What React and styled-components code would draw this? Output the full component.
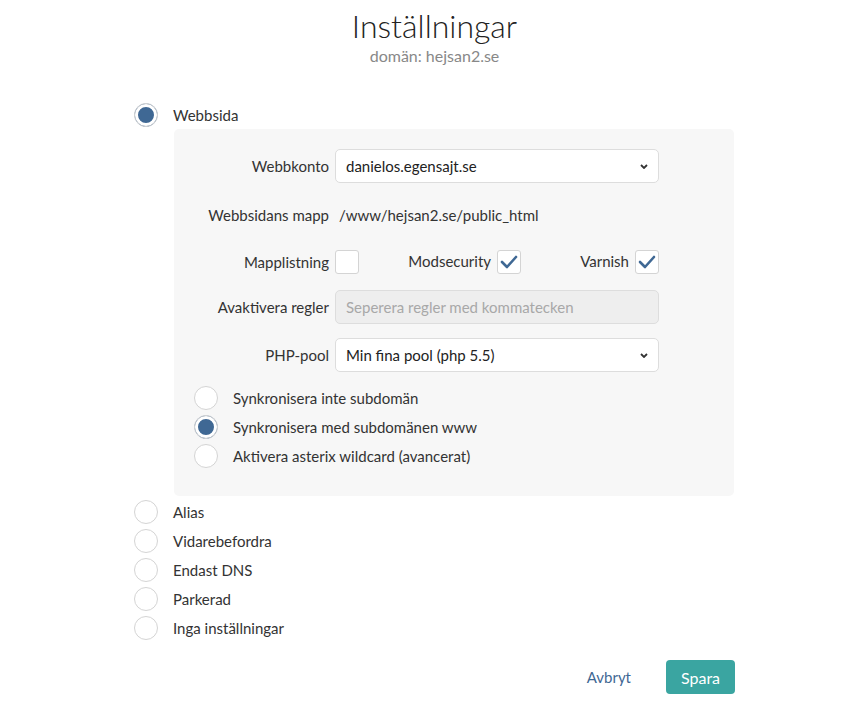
import React from "react";
import styled, { createGlobalStyle } from "styled-components";

const GlobalStyle = createGlobalStyle`
  body {
    margin: 0;
    background: #fff;
    font-family: Lato, "Open Sans", sans-serif;
    color: #333;
  }
`;

const App = () => {
  return (
    <>
      <GlobalStyle />
      <Page>
        <Header>
          <h1>Inställningar</h1>
          <span>domän: hejsan2.se</span>
        </Header>

        <Option>
          <Radio $checked />
          <span>Webbsida</span>
        </Option>

        <Panel>
          <FormRow $mb={15}>
            <Label>Webbkonto</Label>
            <SelectWrap>
              <select defaultValue="danielos.egensajt.se">
                <option>danielos.egensajt.se</option>
              </select>
              <Chevron />
            </SelectWrap>
          </FormRow>
          <FormRow $mb={13}>
            <Label>Webbsidans mapp</Label>
            <Value>/www/hejsan2.se/public_html</Value>
          </FormRow>
          <FormRow $mb={11}>
            <Label>Mapplistning</Label>
            <CheckGroup>
              <Checkbox />
              <CheckLabel>Modsecurity</CheckLabel>
              <Checkbox $checked />
              <CheckLabel>Varnish</CheckLabel>
              <Checkbox $checked />
            </CheckGroup>
          </FormRow>
          <FormRow $mb={14}>
            <Label>Avaktivera regler</Label>
            <TextInput disabled placeholder="Seperera regler med kommatecken" />
          </FormRow>
          <FormRow $mb={14}>
            <Label>PHP-pool</Label>
            <SelectWrap>
              <select defaultValue="Min fina pool (php 5.5)">
                <option>Min fina pool (php 5.5)</option>
              </select>
              <Chevron />
            </SelectWrap>
          </FormRow>

          <SubOptions>
            <Option>
              <Radio />
              <span>Synkronisera inte subdomän</span>
            </Option>
            <Option>
              <Radio $checked />
              <span>Synkronisera med subdomänen www</span>
            </Option>
            <Option>
              <Radio />
              <span>Aktivera asterix wildcard (avancerat)</span>
            </Option>
          </SubOptions>
        </Panel>

        <OptionList>
          {["Alias", "Vidarebefordra", "Endast DNS", "Parkerad", "Inga inställningar"].map(
            (name) => (
              <Option key={name}>
                <Radio />
                <span>{name}</span>
              </Option>
            )
          )}
        </OptionList>

        <Actions>
          <LinkButton>Avbryt</LinkButton>
          <PrimaryButton>Spara</PrimaryButton>
        </Actions>
      </Page>
    </>
  );
};

const Chevron = () => (
  <ChevronIcon width="8" height="5" viewBox="0 0 8 5">
    <path d="M1 1l3 3 3-3" fill="none" stroke="#333" strokeWidth="1.8" />
  </ChevronIcon>
);

const Checkbox = ({ $checked }) => (
  <Box>
    {$checked && (
      <svg width="18" height="14" viewBox="0 0 18 14">
        <path
          d="M2 7l5 5L16 2"
          fill="none"
          stroke="#3f6894"
          strokeWidth="2.6"
          strokeLinecap="round"
          strokeLinejoin="round"
        />
      </svg>
    )}
  </Box>
);

const Page = styled.div`
  width: 601px;
  margin-left: 134px;
  padding-top: 6px;
  padding-bottom: 14px;
`;

const Header = styled.header`
  display: flex;
  flex-direction: column;
  align-items: center;
  margin-bottom: 37px;
  h1 {
    margin: 0;
    font-size: 32px;
    line-height: 40px;
    font-weight: 300;
    color: #222;
  }
  span {
    font-size: 16px;
    line-height: 20px;
    color: #888;
  }
`;

const Option = styled.label`
  display: flex;
  align-items: center;
  gap: 15px;
  height: 24px;
  font-size: 15px;
  color: #333;
`;

const Radio = styled.span`
  box-sizing: border-box;
  width: 24px;
  height: 24px;
  flex: 0 0 24px;
  border-radius: 50%;
  border: 1px solid #d4d4d4;
  background: ${(p) => (p.$checked ? "#3f6894" : "#fff")};
  box-shadow: ${(p) => (p.$checked ? "inset 0 0 0 3px #fff" : "none")};
`;

const Panel = styled.div`
  margin: 2px 0 4px 40px;
  width: 560px;
  box-sizing: border-box;
  padding: 20px 0 28px 0;
  background: #f7f7f7;
  border-radius: 5px;
`;

const FormRow = styled.div`
  display: grid;
  grid-template-columns: 155px 324px;
  column-gap: 6px;
  align-items: center;
  height: 34px;
  margin-bottom: ${(p) => p.$mb}px;
`;

const Label = styled.span`
  text-align: right;
  font-size: 15px;
  color: #333;
`;

const Value = styled.span`
  padding-left: 4px;
  font-size: 15px;
  color: #333;
`;

const SelectWrap = styled.div`
  position: relative;
  height: 34px;
  select {
    appearance: none;
    width: 100%;
    height: 34px;
    box-sizing: border-box;
    padding: 0 30px 0 10px;
    border: 1px solid #ddd;
    border-radius: 5px;
    background: #fff;
    font-family: inherit;
    font-size: 15px;
    color: #222;
    outline: none;
  }
`;

const ChevronIcon = styled.svg`
  position: absolute;
  right: 11px;
  top: 15px;
  pointer-events: none;
`;

const TextInput = styled.input`
  height: 34px;
  box-sizing: border-box;
  padding: 0 10px;
  border: 1px solid #ddd;
  border-radius: 5px;
  background: #eee;
  font-family: inherit;
  font-size: 15px;
  &::placeholder {
    color: #a8a8a8;
  }
`;

const CheckGroup = styled.div`
  display: grid;
  grid-template-columns: 24px 126px 24px 102px 24px;
  column-gap: 6px;
  align-items: center;
`;

const CheckLabel = styled.span`
  text-align: right;
  font-size: 15px;
  color: #333;
  margin-top: -3px;
`;

const Box = styled.span`
  box-sizing: border-box;
  width: 24px;
  height: 24px;
  display: flex;
  align-items: center;
  justify-content: center;
  background: #fff;
  border: 1px solid #d4d4d4;
  border-radius: 3px;
`;

const SubOptions = styled.div`
  display: flex;
  flex-direction: column;
  gap: 5px;
  padding-left: 20px;
`;

const OptionList = styled.div`
  display: flex;
  flex-direction: column;
  gap: 5px;
`;

const Actions = styled.div`
  display: flex;
  justify-content: flex-end;
  align-items: center;
  gap: 35px;
  margin-top: 20px;
`;

const LinkButton = styled.button`
  border: none;
  background: none;
  padding: 0;
  font-family: inherit;
  font-size: 15px;
  color: #3f6894;
  cursor: pointer;
`;

const PrimaryButton = styled.button`
  width: 69px;
  height: 34px;
  border: none;
  border-radius: 4px;
  background: #3aa5a1;
  color: #fff;
  font-family: inherit;
  font-size: 16px;
  cursor: pointer;
`;

export default App;
